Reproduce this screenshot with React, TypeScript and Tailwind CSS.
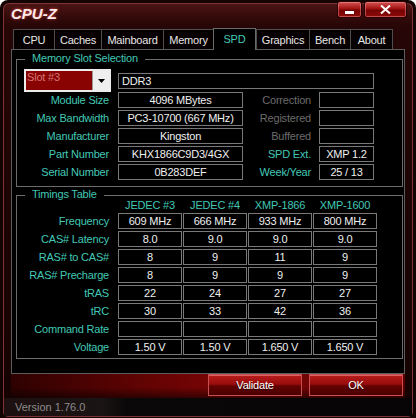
import React from "react";

const teal = "text-[#42c8b5]";

function Box({ children, className = "" }: { children?: React.ReactNode; className?: string }) {
  return (
    <div
      className={
        "h-[16px] border border-[#787878] bg-black text-[#f0f0f0] flex items-center justify-center leading-[14px] whitespace-nowrap " +
        className
      }
    >
      {children}
    </div>
  );
}

function InfoRow({
  label,
  value,
  rlabel,
  rvalue,
  rteal,
}: {
  label: string;
  value: string;
  rlabel: string;
  rvalue: string;
  rteal?: boolean;
}) {
  return (
    <div className="flex h-[16px] items-center">
      <div className={"w-[92px] text-right leading-[16px] whitespace-nowrap " + teal}>{label}</div>
      <Box className="ml-[9px] w-[125px]">{value}</Box>
      <div
        className={
          "w-[68px] text-right leading-[16px] whitespace-nowrap " + (rteal ? teal : "text-[#6c6c6c]")
        }
      >
        {rlabel}
      </div>
      <Box className="ml-[8px] w-[55px]">{rvalue}</Box>
    </div>
  );
}

function TimingRow({ label, vals }: { label: string; vals: string[] }) {
  return (
    <div className="flex h-[16px] items-center">
      <div className={"w-[92px] text-right leading-[16px] whitespace-nowrap " + teal}>{label}</div>
      <div className="ml-[9px] flex gap-[1px]">
        {vals.map((v, i) => (
          <Box key={i} className="w-[64px]">
            {v}
          </Box>
        ))}
      </div>
    </div>
  );
}

const tabs: { name: string; w: string; active?: boolean; last?: boolean }[] = [
  { name: "CPU", w: "w-[41px]" },
  { name: "Caches", w: "w-[47px]" },
  { name: "Mainboard", w: "w-[62px]" },
  { name: "Memory", w: "w-[50px]" },
  { name: "SPD", w: "w-[43px]", active: true },
  { name: "Graphics", w: "w-[53px]" },
  { name: "Bench", w: "w-[41px]" },
  { name: "About", w: "w-[43px]", last: true },
];

const timings: [string, string[]][] = [
  ["Frequency", ["609 MHz", "666 MHz", "933 MHz", "800 MHz"]],
  ["CAS# Latency", ["8.0", "9.0", "9.0", "9.0"]],
  ["RAS# to CAS#", ["8", "9", "11", "9"]],
  ["RAS# Precharge", ["8", "9", "9", "9"]],
  ["tRAS", ["22", "24", "27", "27"]],
  ["tRC", ["30", "33", "42", "36"]],
  ["Command Rate", ["", "", "", ""]],
  ["Voltage", ["1.50 V", "1.50 V", "1.650 V", "1.650 V"]],
];

const capBtn =
  "h-[17px] rounded-[3px] border border-[#2a0000] bg-[linear-gradient(180deg,#d45454_0%,#a81616_42%,#760404_55%,#8e0a0a_100%)] shadow-[inset_0_0_0_1px_rgba(255,160,160,0.45)] flex";

const bigBtn =
  "w-[94px] h-[22px] border border-[#c85050] bg-[linear-gradient(180deg,#b81c1c_0%,#9a0c0c_45%,#620202_55%,#4a0000_100%)] shadow-[inset_0_1px_0_rgba(255,170,170,0.5)] text-white flex items-center justify-center leading-[14px] [text-shadow:0_1px_1px_#300]";

export default function App() {
  return (
    <div className="w-[416px] h-[418px] bg-[#140303] flex flex-col overflow-hidden rounded-t-[8px] [font-family:'Liberation_Sans',Arial,sans-serif] text-[11px] tracking-[-0.2px]">
      {/* Title bar */}
      <div className="mt-[3px] mx-[3px] h-[25px] shrink-0 rounded-t-[6px] border-t border-x border-[#7c3434] bg-[linear-gradient(180deg,#4c1414,#330a0a_55%,#260606)] flex justify-between items-start">
        <div className="ml-[7px] mt-[1px] text-[15px] leading-[17px] font-bold italic tracking-[0px] text-[#fcecec] [text-shadow:0_0_3px_#ff4a4a,0_1px_1px_#000]">
          CPU-Z
        </div>
        <div className="-mt-[3px] mr-[5px] flex gap-[2px]">
          <div className={capBtn + " w-[25px] items-end justify-center pb-[3px]"}>
            <div className="w-[9px] h-[3px] bg-white shadow-[0_0_1px_#000]" />
          </div>
          <div className={capBtn + " w-[43px] items-center justify-center"}>
            <svg width="11" height="9" viewBox="0 0 11 9">
              <path d="M1 0.5 L10 8.5 M10 0.5 L1 8.5" stroke="#ffffff" strokeWidth="2" />
            </svg>
          </div>
        </div>
      </div>

      {/* Body */}
      <div className="mx-[3px] h-[389px] shrink-0 border-x border-b border-[#7c3434] rounded-b-[5px] bg-[linear-gradient(180deg,#260606,#1c0404_50%,#160202)] flex flex-col">
        {/* Tabs */}
        <div className="h-[21px] shrink-0 pl-[9px] flex items-end">
          {tabs.map((t) =>
            t.active ? (
              <div
                key={t.name}
                className={
                  t.w +
                  " relative z-10 -mb-[1px] h-[22px] border-t border-x border-[#6a6a6a] bg-black flex items-center justify-center leading-[14px] pb-[1px] " +
                  teal
                }
              >
                {t.name}
              </div>
            ) : (
              <div
                key={t.name}
                className={
                  t.w +
                  " h-[20px] border-t border-l border-[#4e4e4e] bg-[#070000] text-[#e6e6e6] flex items-center justify-center leading-[14px] pt-[1px] " +
                  (t.last ? "border-r" : "")
                }
              >
                {t.name}
              </div>
            )
          )}
        </div>

        {/* Panel */}
        <div className="mx-[7px] h-[325px] shrink-0 border border-[#5c5c5c] bg-black flex flex-col relative z-0">
          {/* Memory Slot Selection */}
          <div className="relative mt-[9px] ml-[4px] w-[387px] border border-[#6c6c6c] pt-[9px] pb-[6px]">
            <span className={"absolute left-[8px] -top-[8px] px-[7px] bg-black leading-[13px] whitespace-nowrap " + teal}>
              Memory Slot Selection
            </span>
            <div className="flex items-center h-[23px]">
              <div className="ml-[7px] w-[87px] h-[23px] border-2 border-[#ececec] bg-[#8a0303] flex">
                <div className="flex-1 pl-[1px] text-[#d47272] leading-[13px] whitespace-nowrap">Slot #3</div>
                <div className="w-[17px] h-full bg-[#efefef] border-l border-[#9a9a9a] flex items-center justify-center">
                  <svg width="7" height="4" viewBox="0 0 7 4">
                    <path d="M0 0 H7 L3.5 4 Z" fill="#000" />
                  </svg>
                </div>
              </div>
              <div className="ml-[7px] w-[256px] h-[16px] border border-[#787878] text-[#f0f0f0] flex items-center pl-[3px] leading-[14px]">
                DDR3
              </div>
            </div>
            <div className="flex flex-col gap-[2px]">
              <InfoRow label="Module Size" value="4096 MBytes" rlabel="Correction" rvalue="" />
              <InfoRow label="Max Bandwidth" value="PC3-10700 (667 MHz)" rlabel="Registered" rvalue="" />
              <InfoRow label="Manufacturer" value="Kingston" rlabel="Buffered" rvalue="" />
              <InfoRow label="Part Number" value="KHX1866C9D3/4GX" rlabel="SPD Ext." rvalue="XMP 1.2" rteal />
              <InfoRow label="Serial Number" value="0B283DEF" rlabel="Week/Year" rvalue="25 / 13" rteal />
            </div>
          </div>

          {/* Timings Table */}
          <div className="relative mt-[8px] ml-[4px] w-[387px] border border-[#6c6c6c] pb-[3px]">
            <span className={"absolute left-[8px] -top-[8px] px-[7px] bg-black leading-[13px] whitespace-nowrap " + teal}>
              Timings Table
            </span>
            <div className="flex h-[17px] items-center">
              <div className="w-[92px]" />
              <div className="ml-[9px] flex gap-[1px]">
                {["JEDEC #3", "JEDEC #4", "XMP-1866", "XMP-1600"].map((h) => (
                  <div key={h} className={"w-[64px] text-center leading-[16px] whitespace-nowrap " + teal}>
                    {h}
                  </div>
                ))}
              </div>
            </div>
            <div className="flex flex-col gap-[2px]">
              {timings.map(([l, v]) => (
                <TimingRow key={l} label={l} vals={v} />
              ))}
            </div>
          </div>
        </div>

        {/* Button band */}
        <div className="mx-[7px] h-[24px] shrink-0 bg-[linear-gradient(180deg,rgba(0,0,0,0)_55%,rgba(0,0,0,0.55)),linear-gradient(90deg,#2e0101,#640303_35%,#7c0505_55%,#6e0404_80%,#5a0202)] flex justify-end items-start gap-[7px] pr-[2px]">
          <div className={bigBtn}>Validate</div>
          <div className={bigBtn}>OK</div>
        </div>

        {/* Version bar */}
        <div className="h-[18px] shrink-0 mx-[0px] bg-[linear-gradient(90deg,#1e1010,#1a1414_24%,#0a0808_30%,#060404)] flex items-center pl-[11px] text-[#8c8c8c] leading-[14px] tracking-[0px]">
          Version 1.76.0
        </div>
      </div>
    </div>
  );
}
